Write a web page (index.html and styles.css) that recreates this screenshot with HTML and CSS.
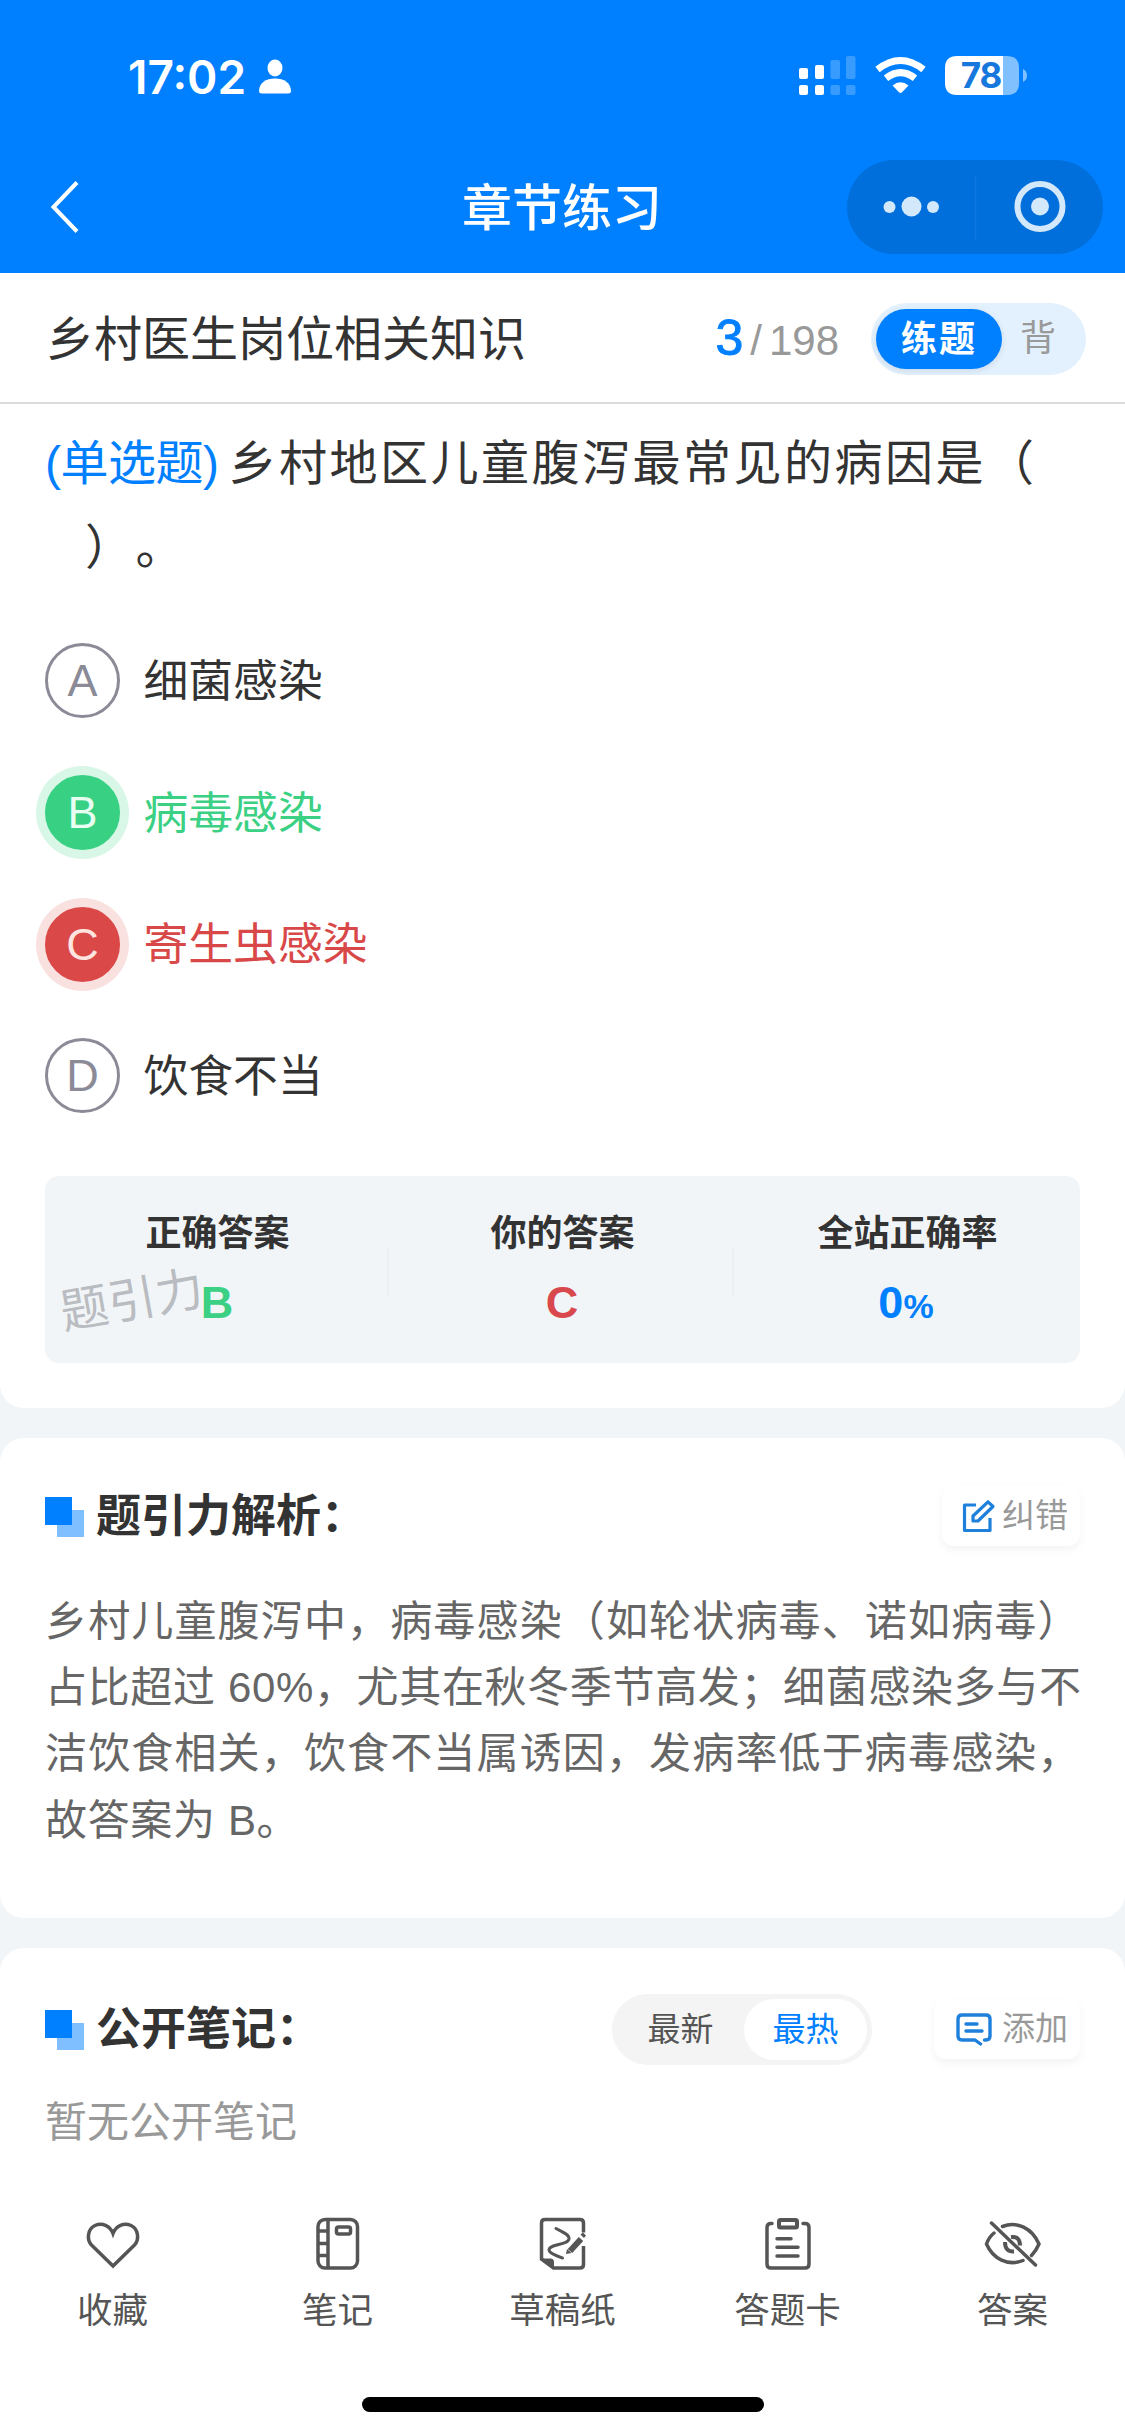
FILE: index.html
```html
<!DOCTYPE html>
<html lang="zh-CN">
<head>
<meta charset="utf-8">
<title>章节练习</title>
<link rel="stylesheet" href="styles.css">
</head>
<body>
<div class="app">
  <header class="top">
    <div class="status">
      <span class="time">17:02</span>
      <svg class="person" width="32" height="36" viewBox="0 0 32 36" fill="#fff"><ellipse cx="16" cy="9" rx="7.5" ry="8.5"/><path d="M0 32C0 24 7 19.500 16 19.500S32 24 32 32Q32 34.500 29 34.500H3Q0 34.500 0 32Z"/></svg>
      <svg class="signal" width="230" height="46" viewBox="0 0 230 46" fill="#fff">
        <rect x="0" y="12" width="9" height="11" rx="2"/><rect x="16" y="9" width="9" height="14" rx="2"/>
        <rect x="0" y="29" width="9" height="10" rx="2"/><rect x="16" y="29" width="9" height="10" rx="2"/>
        <g opacity=".22"><rect x="31.500" y="4" width="9.500" height="19" rx="2"/><rect x="47" y="0" width="9.500" height="23" rx="2"/><rect x="31.500" y="29" width="9.500" height="10" rx="2"/><rect x="47" y="29" width="9.500" height="10" rx="2"/></g>
        <g fill="none" stroke="#fff" stroke-width="7"><path d="M78.500 13.500Q101.500 -4.500 124.500 13.500"/><path d="M87 22.300Q101.500 11 116 22.300"/></g>
        <path d="M93.500 29.500Q101.500 23 109.500 29.500L103 36.300Q101.500 37.600 100 36.300Z"/>
        <path d="M158 0H204V39H158Q146 39 146 27V12Q146 0 158 0Z"/>
        <path opacity=".5" d="M204 0H208Q220 0 220 12V27Q220 39 208 39H204Z"/>
        <path opacity=".5" d="M224 13Q228 15 228 19.500T224 26Z"/>
        <text class="battery" x="182" y="32" text-anchor="middle">78</text>
      </svg>
    </div>
    <div class="nav">
      <svg class="back" width="32" height="56" viewBox="0 0 32 56" fill="none" stroke="#fff" stroke-width="4"><path d="M28 3.500 4.500 28 28 52.500"/></svg>
      <h1>章节练习</h1>
      <svg class="capsule" width="256" height="94" viewBox="0 0 256 94">
        <rect width="256" height="94" rx="47" fill="#006fdb"/>
        <path d="M128.500 16V80" stroke="#0d77df" stroke-width="1.500"/>
        <g fill="#d4e8fb"><circle cx="42.500" cy="47" r="6"/><circle cx="64.500" cy="46.500" r="10"/><circle cx="86" cy="47" r="6"/><circle cx="193" cy="46.500" r="9"/></g>
        <circle cx="193" cy="46.500" r="22.500" fill="none" stroke="#d4e8fb" stroke-width="6"/>
      </svg>
    </div>
  </header>

  <div class="chapter">
    <span class="chapter-name">乡村医生岗位相关知识</span>
    <span class="progress"><b>3</b><i>/</i>198</span>
    <div class="mode"><span class="mode-on">练题</span><span class="mode-off">背</span></div>
  </div>

  <section class="card question">
    <div class="stem"><span class="kind">(单选题)</span>乡村地区儿童腹泻最常见的病因是（<br><span class="blank"></span>）。</div>
    <ul class="options">
      <li><span class="mark">A</span>细菌感染</li>
      <li class="right"><span class="mark">B</span>病毒感染</li>
      <li class="wrong"><span class="mark">C</span>寄生虫感染</li>
      <li><span class="mark">D</span>饮食不当</li>
    </ul>
    <div class="result">
      <div class="cell"><span class="cell-name">正确答案</span><span class="value green">B</span></div>
      <div class="cell"><span class="cell-name">你的答案</span><span class="value red">C</span></div>
      <div class="cell"><span class="cell-name">全站正确率</span><span class="value blue">0<small>%</small></span></div>
      <span class="watermark">题引力</span>
    </div>
  </section>

  <section class="card analysis">
    <div class="head">
      <svg width="39" height="40" viewBox="0 0 39 40"><rect x="12" y="13" width="27" height="27" fill="#80bfff"/><rect width="27" height="28" fill="#0080ff"/></svg>
      <h2>题引力解析：</h2>
      <div class="action fix">
        <svg width="34" height="34" viewBox="0 0 34 34" fill="none" stroke="#1f80dc" stroke-width="3.200" stroke-linejoin="round"><path d="M15 5H3.500V30.500H29V18"/><path d="M12 21V16L27 1.800 32 6.500 17 21Z"/></svg>
        <span>纠错</span>
      </div>
    </div>
    <p class="text">乡村儿童腹泻中，病毒感染（如轮状病毒、诺如病毒）<br><span class="tight">占比超过 60%，尤其在秋冬季节高发；细菌感染多与不</span><br>洁饮食相关，饮食不当属诱因，发病率低于病毒感染，<br><span class="tight">故答案为 B。</span></p>
  </section>

  <section class="card notes">
    <div class="head">
      <svg width="39" height="40" viewBox="0 0 39 40"><rect x="12" y="13" width="27" height="27" fill="#80bfff"/><rect width="27" height="28" fill="#0080ff"/></svg>
      <h2>公开笔记：</h2>
      <div class="sort"><span>最新</span><span class="sort-on">最热</span></div>
      <div class="action add">
        <svg width="36" height="34" viewBox="0 0 36 34" fill="none" stroke="#1f80dc" stroke-width="3.400" stroke-linecap="round" stroke-linejoin="round"><path d="M24.500 31 19 27H6Q2 27 2 23V6Q2 2 6 2H30Q34 2 34 6V23Q34 27 30 27H28.500"/><path d="M10 11H21M10 18H26"/></svg>
        <span>添加</span>
      </div>
    </div>
    <p class="empty">暂无公开笔记</p>
  </section>

  <footer class="tabs">
    <div class="tab"><svg viewBox="0 0 60 60"><path d="M30 52 8.500 31C3.500 25.500 4.500 15 12 11.500 19 8.500 27 11.500 30 19.500 33 11.500 41 8.500 48 11.500 55.500 15 56.500 25.500 51.500 31Z"/></svg><span>收藏</span></div>
    <div class="tab"><svg viewBox="0 0 60 60"><rect x="10" y="5.500" width="39.500" height="48.500" rx="7"/><path d="M20 5.500V54M10 17H20M10 29.500H20M10 41.500H20"/><rect x="28.500" y="13" width="14" height="7" rx="2"/></svg><span>笔记</span></div>
    <div class="tab"><svg viewBox="0 0 60 60"><path d="M50.500 18.500V9Q50.500 5.500 47 5.500H12Q8.500 5.500 8.500 9V45L20.500 54H47Q50.500 54 50.500 50.500V32"/><path d="M8 45H18Q20.500 45 20.500 48V54Z" fill="#555" stroke-width="1"/><path stroke-linecap="round" stroke-width="3" d="M23 14.500C29 18 36.500 20 36 25 35 31 17 30 16 35.500 15.500 39 24 42 29.500 44"/><path d="M37 37 48 25" stroke-width="6"/><path d="M33 40 34 35 38.500 39ZM47.500 20.500 50 18.500 53 21.500 51 24Z" fill="#555" stroke="none"/></svg><span>草稿纸</span></div>
    <div class="tab"><svg viewBox="0 0 60 60"><path stroke-linecap="round" d="M14 9.500H13Q9 9.500 9 13.500V50Q9 54 13 54H47Q51 54 51 50V13.500Q51 9.500 47 9.500H45"/><rect x="21" y="6" width="18" height="7.500" rx="1.500" stroke-width="4"/><path stroke-linecap="round" d="M19 24.700H33M19 33.300H40M19 42H40"/></svg><span>答题卡</span></div>
    <div class="tab"><svg viewBox="0 0 60 60"><g stroke-linecap="round"><path d="M8.500 9 52.500 51"/><path d="M19.500 12.500C34 7 49 14 56 30Q53 37 48.500 41.500"/><path d="M11 19Q6 23 3.500 30C10 45 25 52.500 40 46.500"/></g><path d="M28 23Q37 22 37 31.500M22 28Q22 38 31 37.500" stroke-width="4"/></svg><span>答案</span></div>
  </footer>
  <div class="home"></div>
</div>
</body>
</html>
```
FILE: styles.css
```css
* { box-sizing: border-box; }
body { margin: 0; font-family: "Liberation Sans", "Noto Sans CJK SC", sans-serif; color: #333; text-spacing-trim: space-all; }
h1, h2, p, ul { margin: 0; padding: 0; }
svg { display: block; flex: none; overflow: visible; }
.app { width: 1125px; height: 2436px; overflow: hidden; display: flex; flex-direction: column; background: #f2f5f7; }

.top { height: 273px; flex: none; background: #0080ff; color: #fff; }
.status { height: 140px; display: flex; align-items: flex-start; padding: 56px 96px 0 128px; }
.time { font: 600 46px/42px Inter, sans-serif; width: 131px; white-space: nowrap; letter-spacing: 0; }
.person { margin-top: 3px; }
.signal { margin-left: auto; }
.battery { font: 700 35px/40px Inter, sans-serif; letter-spacing: -1px; fill: #1677dc; }
.nav { height: 133px; padding: 0 22px 0 49px; display: grid; grid-template-columns: 256px 1fr 256px; align-items: center; }
.back { margin-top: 1px; }
h1 { font-size: 50px; line-height: 60px; font-weight: 500; text-align: center; margin-right: 28px; margin-top: 5px; }
.capsule { margin-top: 1px; }

.chapter { height: 131px; flex: none; background: #fff; border-bottom: 2px solid #dcdcdc; display: flex; align-items: center; padding: 0 39px 0 46px; }
.chapter-name { font-size: 48px; line-height: 60px; margin-top: 4px; }
.progress { margin-left: auto; margin-right: 32px; margin-top: 3px; font-size: 42px; line-height: 50px; color: #999; }
.progress b { font-size: 50px; font-weight: 500; color: #0080ff; -webkit-text-stroke: 1px #0080ff; }
.progress i { font-style: normal; margin: 0 7px; }
.mode { width: 215px; height: 72px; border-radius: 36px; background: #e3f1ff; padding: 6px 5px; margin-top: 2px; display: flex; align-items: center; font-size: 36px; line-height: 62px; }
.mode-on { width: 126px; height: 60px; border-radius: 30px; background: #0080ff; color: #fff; font-weight: 700; letter-spacing: 2px; text-align: center; box-shadow: 0 2px 6px #0000001a; }
.mode-off { color: #999; margin-left: 18px; }

.card { background: #fff; border-radius: 24px; flex: none; margin-bottom: 30px; padding: 0 45px; }
.question { height: 1004px; border-radius: 0 0 24px 24px; }
.stem { padding-top: 18px; height: 211px; font-size: 48px; line-height: 84px; letter-spacing: 2.500px; white-space: nowrap; }
.kind { color: #0080ff; letter-spacing: -.5px; margin-right: 10px; }
.blank { display: inline-block; width: 40px; }
.options { list-style: none; font-size: 44.800px; }
.options li { height: 131.700px; display: flex; align-items: center; line-height: 60px; }
.mark { width: 75px; height: 75px; border-radius: 50%; border: 3px solid #8b8a97; color: #8b8a97; font-size: 45px; line-height: 69px; text-align: center; margin-right: 23.500px; }
.right { color: #3bd083; }
.wrong { color: #d94848; }
.right .mark { background: #38d184; border-color: #38d184; color: #e8fff2; box-shadow: 0 0 0 9px #d9f7e7; }
.wrong .mark { background: #da4848; border-color: #da4848; color: #ffe5e0; box-shadow: 0 0 0 9px #f9e1e0; }

.result { position: relative; margin-top: 34px; height: 187px; border-radius: 14px; background: #f2f5f8; display: grid; grid-template-columns: repeat(3, 1fr); }
.cell { display: flex; flex-direction: column; align-items: center; padding-top: 33px; }
.cell:not(:nth-child(3)) { background: linear-gradient(#ebeef2, #ebeef2) no-repeat right 1px top 72px / 2px 48px; }
.cell-name { font-size: 36px; line-height: 50px; font-weight: 700; }
.value { font-size: 45px; line-height: 50px; font-weight: 700; margin-top: 19px; margin-right: 1px; }
.value small { font-size: 34px; }
.green { color: #3bd083; }
.red { color: #d8484c; }
.blue { color: #0080ff; margin-right: 3px; }
.watermark { position: absolute; left: 15px; top: 93px; font-size: 48px; line-height: 64px; color: #b9bcc0; transform: rotate(-10deg); }

.analysis { height: 480px; }
.head { display: flex; align-items: center; height: 60px; }
.analysis .head { margin-top: 48px; }
.head svg:first-child { margin-top: 1px; }
h2 { font-size: 45px; line-height: 60px; font-weight: 700; margin-left: 12px; margin-top: 2px; }
.action { height: 60px; border-radius: 12px; display: flex; align-items: center; justify-content: flex-end; padding-right: 12px; box-shadow: 0 4px 10px #0000000d; font-size: 33px; line-height: 50px; color: #999; background: #fff; }
.fix { width: 138px; margin-left: auto; gap: 7px; }
.add { width: 146px; margin-left: 62px; gap: 10px; }
.text { margin-top: 43px; font-size: 42px; line-height: 66.200px; letter-spacing: 1.150px; color: #666; white-space: nowrap; }
.tight { letter-spacing: .65px; }

.notes { height: 242px; margin-bottom: 0; padding-top: 51px; border-radius: 24px 24px 0 0; }
.sort { margin-left: auto; width: 260px; height: 71px; border-radius: 36px; background: #f4f4f4; padding: 5px; display: flex; font-size: 33px; line-height: 62px; color: #555; text-align: center; }
.sort span { width: 127px; }
.sort .sort-on { width: 123px; height: 61px; border-radius: 31px; background: #fff; color: #0080ff; }
.empty { margin-top: 34px; font-size: 42px; line-height: 60px; color: #999; }

.tabs { height: 180px; flex: none; background: #fff; display: grid; grid-template-columns: repeat(5, 1fr); padding-top: 24px; }
.tab { display: flex; flex-direction: column; align-items: center; font-size: 35.500px; line-height: 50px; color: #555; }
.tab svg { width: 60px; height: 60px; fill: none; stroke: #555; stroke-width: 3.500; margin-bottom: 12px; }
.home { flex: 1; background: #fff; display: flex; justify-content: center; padding-top: 27px; }
.home::before { content: ""; width: 402px; height: 15px; border-radius: 8px; background: #000; }
```
